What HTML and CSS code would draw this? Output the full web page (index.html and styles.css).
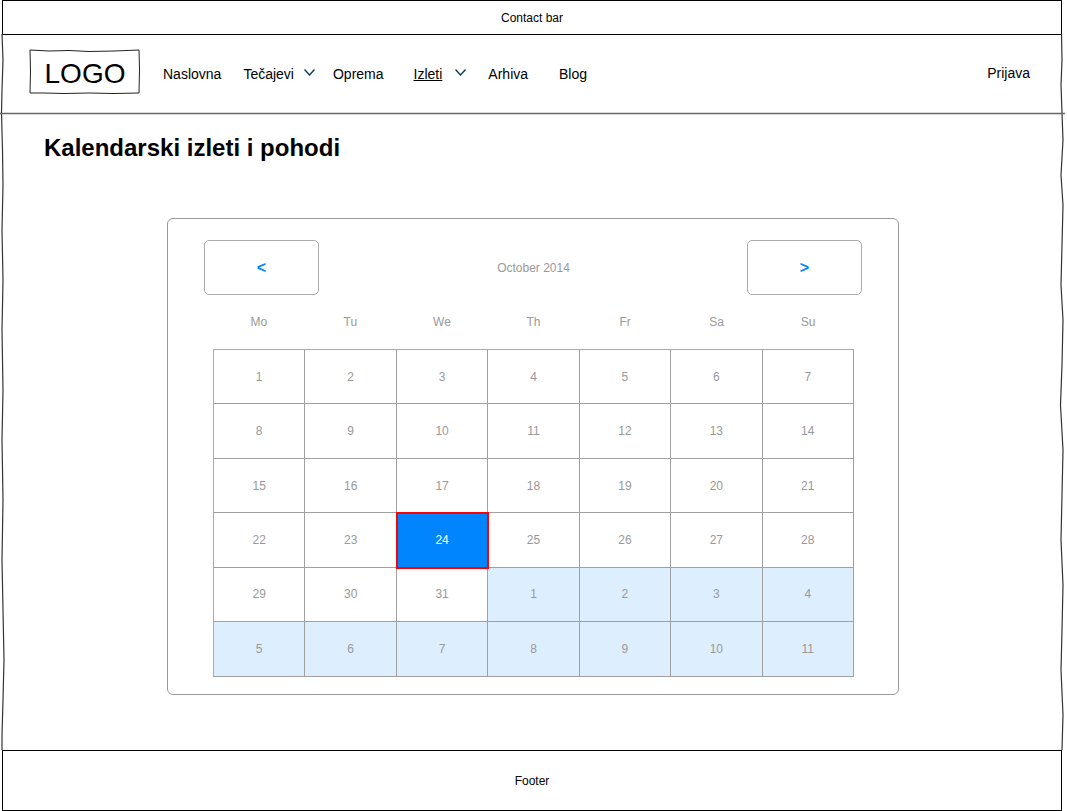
FILE: index.html
```html
<!DOCTYPE html>
<html lang="en">
<head>
    <meta charset="UTF-8">
    <title>Kalendarski izleti i pohodi</title>
    <link rel="stylesheet" href="styles.css">
</head>
<body>
<div class="page">
    <!-- sketchy outer frame -->
    <svg class="frame" width="1067" height="811" viewBox="0 0 1067 811" fill="none">
        <path class="frame-line" d="M2 34 L3 60 L2 90 L1.500 113 L2.500 150 L3 185 L2 230 L3 280 L2 330 L3 390 L2 440 L3 500 L2 560 L3 610 L4 660 L3 700 L2 735 L2 750"/>
        <path class="frame-line" d="M1061.500 34 L1062 60 L1061 85 L1062 113 L1063 140 L1061 175 L1063 205 L1062 245 L1061 285 L1063 320 L1062 365 L1060.500 405 L1063 450 L1062 495 L1061 540 L1063 585 L1062 630 L1061 670 L1063 715 L1062 750"/>
        <path class="rule-line" d="M0 113.500 L300 113.500 L600 113.500 L1065 113.500"/>
    </svg>

    <div class="contact-bar">Contact bar</div>

    <header class="header">
        <div class="logo">
            <svg class="logo-box" width="112" height="46" viewBox="0 0 112 46" fill="none">
                <path d="M1 1 L20 2 L40 1.500 L60 2.500 L85 2 L110 1 L110.500 20 L110 44 L85 44.500 L60 44 L35 44.500 L15 44 L1 44 L1.500 22 Z"/>
            </svg>
            LOGO
        </div>
        <nav class="nav">
            <a class="nav-link">Naslovna</a>
            <a class="nav-link">Tečajevi</a>
            <svg class="chevron" width="11" height="7" viewBox="0 0 11 7" fill="none"><path d="M0.500 0.500 L5.500 6 L10.500 0.500"/></svg>
            <a class="nav-link">Oprema</a>
            <a class="nav-link active">Izleti</a>
            <svg class="chevron" width="11" height="7" viewBox="0 0 11 7" fill="none"><path d="M0.500 0.500 L5.500 6 L10.500 0.500"/></svg>
            <a class="nav-link">Arhiva</a>
            <a class="nav-link">Blog</a>
        </nav>
        <a class="login">Prijava</a>
    </header>

    <main class="main">
        <h1 class="title">Kalendarski izleti i pohodi</h1>

        <div class="calendar">
            <div class="cal-top">
                <button class="cal-btn">&lt;</button>
                <span class="cal-month">October 2014</span>
                <button class="cal-btn">&gt;</button>
            </div>

            <div class="cal-days">
                <span>Mo</span><span>Tu</span><span>We</span><span>Th</span><span>Fr</span><span>Sa</span><span>Su</span>
            </div>

            <div class="cal-grid">
                <div class="cell">1</div><div class="cell">2</div><div class="cell">3</div><div class="cell">4</div><div class="cell">5</div><div class="cell">6</div><div class="cell">7</div>
                <div class="cell">8</div><div class="cell">9</div><div class="cell">10</div><div class="cell">11</div><div class="cell">12</div><div class="cell">13</div><div class="cell">14</div>
                <div class="cell">15</div><div class="cell">16</div><div class="cell">17</div><div class="cell">18</div><div class="cell">19</div><div class="cell">20</div><div class="cell">21</div>
                <div class="cell">22</div><div class="cell">23</div><div class="cell today">24</div><div class="cell">25</div><div class="cell">26</div><div class="cell">27</div><div class="cell">28</div>
                <div class="cell">29</div><div class="cell">30</div><div class="cell">31</div><div class="cell next">1</div><div class="cell next">2</div><div class="cell next">3</div><div class="cell next">4</div>
                <div class="cell next">5</div><div class="cell next">6</div><div class="cell next">7</div><div class="cell next">8</div><div class="cell next">9</div><div class="cell next">10</div><div class="cell next">11</div>
            </div>
        </div>
    </main>

    <footer class="footer">Footer</footer>
</div>
</body>
</html>
```

FILE: styles.css
```css
* {
    margin: 0;
    padding: 0;
    box-sizing: border-box;
}

html, body {
    overflow: hidden;
}

body {
    font-family: "Liberation Sans", Arial, sans-serif;
    color: #000;
    background-color: #fff;
}

.page {
    position: relative;
    width: 1060px;
    height: 811px;
    margin-left: 2px;
    display: flex;
    flex-direction: column;
}

/* frame drawn on top of the page */
.frame {
    position: absolute;
    left: -2px;
    top: 0;
    pointer-events: none;
}

.frame-line {
    stroke: #333;
    stroke-width: 1.2;
}

.rule-line {
    stroke: #666;
    stroke-width: 1.4;
}

.contact-bar {
    height: 35px;
    border: 1px solid #000;
    font-size: 12px;
    display: flex;
    align-items: center;
    justify-content: center;
}

.header {
    height: 78px;
    flex-shrink: 0;
    display: flex;
    align-items: center;
    padding: 0 32px 0 28px;
}

.logo {
    position: relative;
    width: 110px;
    height: 44px;
    font-size: 28px;
    display: flex;
    align-items: center;
    justify-content: center;
}

.logo-box {
    position: absolute;
    left: -1px;
    top: -3px;
}

.logo-box path {
    stroke: #222;
    stroke-width: 1;
}

.nav {
    display: flex;
    align-items: center;
    margin-left: 23px;
    font-size: 14px;
    flex: 1;
}

.nav-link:nth-of-type(2) {
    margin-left: 22px;
}

.nav-link:nth-of-type(3) {
    margin-left: 18px;
}

.nav-link:nth-of-type(4) {
    margin-left: 30px;
}

.nav-link:nth-of-type(5) {
    margin-left: 22px;
}

.nav-link:nth-of-type(6) {
    margin-left: 31px;
}

.nav-link.active {
    text-decoration: underline;
}

.chevron {
    margin-left: 10px;
    margin-bottom: 3px;
}

.nav-link.active + .chevron {
    margin-left: 13px;
}

.chevron path {
    stroke: #0b3a5a;
    stroke-width: 1.4;
}

.login {
    font-size: 14px;
    margin-bottom: 2px;
}

.main {
    flex: 1;
    padding-top: 21px;
}

.title {
    font-size: 24px;
    line-height: 28px;
    margin-left: 42px;
}

.calendar {
    width: 732px;
    height: 477px;
    margin: 56px 0 0 165px;
    padding: 21px 36px 0;
    border: 1px solid #999;
    border-radius: 6px;
    font-size: 12px;
    color: #999;
}

.cal-top {
    display: flex;
    align-items: center;
    justify-content: space-between;
}

.cal-month {
    margin-left: 1px;
}

.cal-btn {
    width: 115px;
    height: 55px;
    border: 1px solid #aaa;
    border-radius: 5px;
    background-color: #fff;
    color: #0085ff;
    font-family: inherit;
    font-size: 16px;
    font-weight: bold;
}

.cal-days {
    display: grid;
    grid-template-columns: repeat(7, 1fr);
    width: 641px;
    height: 54px;
    margin-left: 9px;
    align-items: center;
    text-align: center;
}

.cal-grid {
    display: grid;
    grid-template-columns: repeat(7, 1fr);
    grid-template-rows: repeat(6, 1fr);
    width: 641px;
    height: 327.500px;
    margin-left: 9px;
    border-top: 1px solid #aaa;
    border-left: 1px solid #aaa;
}

.cell {
    display: flex;
    align-items: center;
    justify-content: center;
    border-right: 1px solid #a0a0a0;
    border-bottom: 1px solid #a0a0a0;
}

.cell.next {
    background-color: #ddeeff;
}

.cell.today {
    background-color: #0085ff;
    color: #fff;
    outline: 2px solid #f00;
    outline-offset: -1px;
    z-index: 1;
}

.footer {
    height: 61px;
    flex-shrink: 0;
    border: 1px solid #000;
    font-size: 12px;
    display: flex;
    align-items: center;
    justify-content: center;
}
```
